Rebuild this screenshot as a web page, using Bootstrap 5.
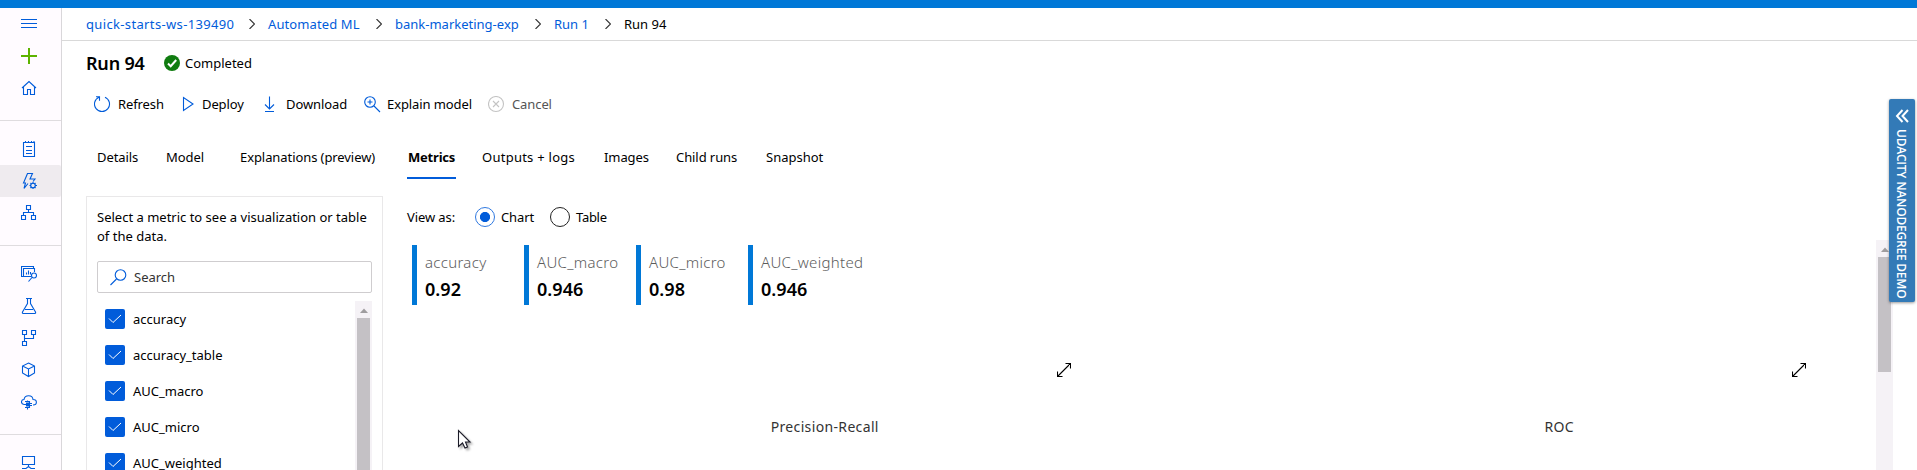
<!DOCTYPE html>
<html lang="en">
<head>
<meta charset="utf-8">
<title>Run 94</title>
<link href="https://cdn.jsdelivr.net/npm/bootstrap@5.3.0/dist/css/bootstrap.min.css" rel="stylesheet">
<style>
body{font:13px/19px "Noto Sans","Open Sans",sans-serif;color:#000;background:#fff;height:470px;overflow:hidden}
svg{display:block;flex:none;fill:none;stroke:#015cda;stroke-width:1.1}
.topbar{height:8px;background:#0078d7}
.shell{height:462px}
.rail{width:62px;background:#fffbff;border-right:1px solid #d9d7da;flex:none}
.rail a{height:32px;padding-left:21px;display:flex;align-items:center;flex:none}
.rail a.on{background:#efebef;border-radius:0 2px 2px 0}
.rail hr{margin:16px 0 12px;border-top:1px solid #dfdcdf;opacity:1;flex:none}
.rail .plus{stroke:#5db300;stroke-width:2}
.crumbs{height:33px;border-bottom:1px solid #d9d9d9;padding-left:24px}
.crumbs a,.crumbs span{white-space:nowrap;flex:none}
.crumbs a{color:#015cda;text-decoration:none}
.crumbs svg{stroke:#333;margin-right:13px}
.crumbs .ws{letter-spacing:.35px}
.ttl{font-size:18px;font-weight:600;width:78px;margin:0;line-height:24px;letter-spacing:-.2px}
.head{height:44px;padding-left:24px}
.tools{height:38px;padding-left:32px}
.tools div{display:flex;align-items:center;white-space:nowrap;flex:none;letter-spacing:-.1px}
.tabs{height:68px;padding:12px 0 0 35px}
.tabs a{color:#000;text-decoration:none;white-space:nowrap;flex:none;height:44px;line-height:44px;letter-spacing:-.08px}
.tabs a.on{font-weight:700;border-bottom:2px solid #015cda;padding-left:1px;width:49px;letter-spacing:-.2px;margin-right:26px}
.panel{width:297px;margin-left:24px;border:1px solid #e9e8e9;padding:11px 10px 0;height:290px;overflow:hidden;flex:none}
.find{height:32px;border:1px solid #cfcdcf;border-radius:2px;margin-top:15px;padding-left:12px;color:#333}
.find svg{margin-right:7px}
.picks{margin-top:8px}
.pick{height:36px;padding-left:8px}
.pick i{width:20px;height:20px;background:#015cda;border-radius:2px;margin-right:8px}
.pick svg{stroke:#fff;stroke-width:1}
.track{width:17px;background:#f5f2f6;height:180px;flex:none}
.track svg{margin:7px auto 5px;fill:#9f9d9f;stroke:none}
.thumb{width:13px;margin:0 auto;background:#c4c1c5;height:170px}
.track.page{height:230px;margin:2px 24px 0 0}
.page .thumb{height:115px}
.views{height:42px;padding-left:24px;letter-spacing:-.1px}
.views i{width:20px;height:20px;border:1px solid #222;border-radius:50%;margin-right:6px;flex:none}
.views i.on{border-color:#3079e0;background:radial-gradient(circle,#015cda 0 4.7px,#fff 5.4px)}
.tiles{padding:7px 0 0 29px;height:67px}
.tile{width:112px;height:60px;border-left:5px solid #0078d7;padding:7px 0 0 8px;flex:none;font-size:15px;line-height:20px;color:#5c5c5c;font-weight:300;white-space:nowrap;letter-spacing:.3px}
.tile b{display:block;color:#000;font-size:18px;font-weight:600;line-height:30px;margin-top:2px;letter-spacing:.05px}
.plots{height:165px;padding-left:24px}
.plot{padding-top:58px;font-size:14px;color:#333}
.plot svg{stroke:#000;margin:0 70px 0 auto}
.plot:first-child svg{margin-right:70.500px}
.plot p{text-align:center;margin:40px 0 0 101px;letter-spacing:.35px}
.demo{position:absolute;left:1889px;top:99px;width:26px;height:203px;background:#337ab7;border-radius:2px;box-shadow:0 1px 3px #0006;color:#fff;font:600 12px/26px "Open Sans",sans-serif;padding-top:10px}
.demo svg{stroke:#fff;stroke-width:2;margin:0 0 6px 6px}
.demo span{display:block;writing-mode:vertical-rl;white-space:nowrap;line-height:24px;letter-spacing:-.22px}
.pointer{position:absolute;left:457px;top:429px;fill:#fff;stroke:#1b1b28;filter:drop-shadow(2px 2px 1px #0005)}
</style>
</head>
<body>
<div class="topbar"></div>
<div class="shell d-flex">
<nav class="rail d-flex flex-column">
<a href="#"><svg width="16" height="16"><path d="M0 3.500h16M0 7.500h16M0 11.500h16"/></svg></a>
<a href="#"><svg class="plus" width="16" height="16"><path d="M0 8h16M8 0v16"/></svg></a>
<a href="#"><svg width="16" height="16"><path d="M1 8l7-6.500L15 8M2.500 7v7.500h4V9.500h3v5h4V7"/></svg></a>
<hr>
<a href="#"><svg width="16" height="16"><path d="M2.500 1.500h11v14h-11zM5 5.500h6M5 9.500h6M5 12.500h6M4.500 0v2M7.500 0v2M10.500 0v2M13 0v2"/></svg></a>
<a href="#" class="on"><svg width="16" height="16"><path d="M7 10.500L3 15.500l1.500-5.500h-2L6.500.5h5L9 6h5l-2 2.500"/><circle cx="12" cy="12.500" r="2.300"/><path d="M12 9v1.500M12 14.500V16M8.500 12.500H10M14 12.500h2M9.500 10l1 1M13.500 14l1 1M14.500 10l-1 1M10.500 14l-1 1"/></svg></a>
<a href="#"><svg width="16" height="16"><path d="M5.500.5h4v4h-4zM.5 10.500h4v4h-4zM10.500 10.500h4v4h-4zM7.500 4.500v3M2.500 10.500v-3h10v3"/></svg></a>
<hr>
<a href="#"><svg width="16" height="16"><path d="M2 10.500H.5V.5h12V2M10 10.500H2.500v-8h11V6M5.500 8.500V6.500M7.500 8.500V4.500M9.500 8.500V6"/><circle cx="13" cy="9.500" r="2.500"/><path d="M11 11.500L7.500 15.500"/></svg></a>
<a href="#"><svg width="16" height="16"><path d="M5 .5h6M6.500.5v5L1.500 14q-.5 1.500 1 1.500h11q1.500 0 1-1.500L9.500 5.500v-5M4 11.500h8"/></svg></a>
<a href="#"><svg width="16" height="16"><path d="M1.500.5h4v4h-4zM10.500.5h4v4h-4zM1.500 11.500h4v4h-4zM3.500 4.500v7M3.500 8.500h9v-4"/></svg></a>
<a href="#"><svg width="16" height="16"><path d="M7.500 1l6 3v7l-6 3.500-6-3.500V4zM1.500 4l6 3 6-3M7.500 7v7.500"/></svg></a>
<a href="#"><svg width="16" height="16"><path d="M5 10.500H3C-.5 10-.2 5.500 3 5.500 4 .3 11.500.7 12 5.500c4.500 0 4.500 5.500 0 5.500"/><path d="M4 7.500h4.500v6H4M6.500 6.500v1M6.500 13.500v2M9 9.500h2M9 11.500h2"/><path d="M5.500 9h2.500v3h-2.500z" fill="#015cda"/></svg></a>
<hr>
<a href="#"><svg width="16" height="16"><path d="M1.500 1.500h12v8h-12zM7.500 9.500v3M1 13.500h4l2.500-2 2.500 2h4"/></svg></a>
</nav>
<main class="flex-grow-1" style="min-width:0">
<div class="crumbs d-flex align-items-center">
<a href="#" class="ws" style="width:163px">quick-starts-ws-139490</a><svg width="6" height="10"><path d="M.5 0l5 5-5 5"/></svg>
<a href="#" style="width:108px;letter-spacing:.1px">Automated ML</a><svg width="6" height="10"><path d="M.5 0l5 5-5 5"/></svg>
<a href="#" style="width:140px">bank-marketing-exp</a><svg width="6" height="10"><path d="M.5 0l5 5-5 5"/></svg>
<a href="#" style="width:51px">Run 1</a><svg width="6" height="10"><path d="M.5 0l5 5-5 5"/></svg>
<span>Run 94</span>
</div>
<div class="head d-flex align-items-center">
<h1 class="ttl">Run 94</h1>
<svg class="me-1" width="17" height="16"><circle cx="8" cy="8" r="8" fill="#107c10" stroke="none"/><path d="M4 8.500l2.700 2.700L12.200 5" stroke="#fff" stroke-width="2"/></svg><span>Completed</span>
</div>
<div class="tools d-flex align-items-center">
<div style="width:87px"><svg style="margin-right:7px" width="17" height="17"><path d="M11 1.200a7.500 7.500 0 1 1-6 0M2 .8h3.500v4"/></svg>Refresh</div>
<div style="width:82px"><svg width="21" height="16"><path d="M2.500 1.500v13l9.500-6.500z"/></svg>Deploy</div>
<div style="width:101px"><svg width="23" height="17"><path d="M6.500.5v12M2 8.500l4.500 4.500L11 8.500M2 15.500h9"/></svg>Download</div>
<div style="width:124px"><svg style="margin-right:6px" width="17" height="17"><circle cx="6" cy="6" r="5.300"/><path d="M10 10l6 6M3.500 6h5M6 3.500v5"/></svg>Explain model</div>
<div style="color:#555"><svg style="margin-right:7px;stroke:#c4c4c4" width="17" height="17"><circle cx="8" cy="8" r="7.500"/><path d="M5 5l6 6M11 5l-6 6"/></svg>Cancel</div>
</div>
<div class="tabs d-flex align-items-start">
<a href="#" style="width:69px">Details</a><a href="#" style="width:74px">Model</a><a href="#" style="width:167px">Explanations (preview)</a><a href="#" class="on">Metrics</a><a href="#" style="width:122px;letter-spacing:.25px">Outputs + logs</a><a href="#" style="width:72px">Images</a><a href="#" style="width:90px">Child runs</a><a href="#" style="letter-spacing:0">Snapshot</a>
</div>
<div class="d-flex" style="margin-top:5px">
<section class="panel">
<div>Select a metric to see a visualization or table<br>of the data.</div>
<div class="find d-flex align-items-center"><svg width="17" height="17"><circle cx="10.500" cy="6" r="5.300"/><path d="M6.500 10L.5 16"/></svg>Search</div>
<div class="picks d-flex">
<div class="flex-grow-1">
<div class="pick d-flex align-items-center"><i><svg width="20" height="20"><path d="M4 9.500l4 4 8-7.500"/></svg></i>accuracy</div>
<div class="pick d-flex align-items-center"><i><svg width="20" height="20"><path d="M4 9.500l4 4 8-7.500"/></svg></i>accuracy_table</div>
<div class="pick d-flex align-items-center"><i><svg width="20" height="20"><path d="M4 9.500l4 4 8-7.500"/></svg></i>AUC_macro</div>
<div class="pick d-flex align-items-center"><i><svg width="20" height="20"><path d="M4 9.500l4 4 8-7.500"/></svg></i>AUC_micro</div>
<div class="pick d-flex align-items-center"><i><svg width="20" height="20"><path d="M4 9.500l4 4 8-7.500"/></svg></i>AUC_weighted</div>
</div>
<div class="track"><svg width="8" height="5"><path d="M0 5l4-4.500L8 5z"/></svg><div class="thumb"></div></div>
</div>
</section>
<section class="flex-grow-1">
<div class="views d-flex align-items-center"><span style="width:68px">View as:</span><i class="on"></i><span style="width:49px">Chart</span><i></i><span style="letter-spacing:-.3px">Table</span></div>
<div class="d-flex">
<div class="flex-grow-1">
<div class="tiles d-flex">
<div class="tile">accuracy<b>0.92</b></div><div class="tile">AUC_macro<b>0.946</b></div><div class="tile">AUC_micro<b>0.98</b></div><div class="tile">AUC_weighted<b>0.946</b></div>
</div>
<div class="plots d-flex">
<div class="plot w-50"><svg width="14" height="14"><path d="M.5 13.500l13-13M8.500.5h5v5M.5 8.500v5h5"/></svg><p>Precision-Recall</p></div>
<div class="plot w-50"><svg width="14" height="14"><path d="M.5 13.500l13-13M8.500.5h5v5M.5 8.500v5h5"/></svg><p>ROC</p></div>
</div>
</div>
<div class="track page"><svg width="8" height="5"><path d="M0 5l4-4.500L8 5z"/></svg><div class="thumb"></div></div>
</div>
</section>
</div>
</main>
</div>
<div class="demo"><svg width="14" height="14"><path d="M7.500 1L2 7l5.500 6M13 1L7.500 7l5.500 6"/></svg><span>UDACITY NANODEGREE DEMO</span></div>
<svg class="pointer" width="16" height="22"><path d="M1.500 1.500v16l4-3.500 2.500 5 2.500-1-2-5h4.500z"/></svg>
<script src="https://cdn.jsdelivr.net/npm/bootstrap@5.3.0/dist/js/bootstrap.bundle.min.js"></script>
</body>
</html>
